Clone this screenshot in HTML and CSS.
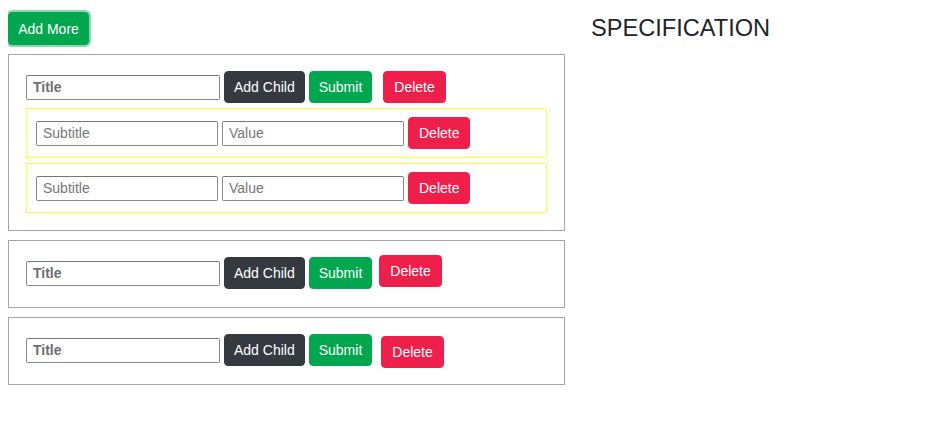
FILE: index.html
```html
<!DOCTYPE html>
<html>
<head>
<meta charset="utf-8">
<link rel="stylesheet" href="styles.css">
</head>
<body>
<div class="layout">
  <div class="left">
    <button class="btn btn-green btn-focus">Add More</button>
    <div class="card card-first">
      <div class="row">
        <input class="field field-title" placeholder="Title">
        <button class="btn btn-dark">Add Child</button>
        <button class="btn btn-green">Submit</button>
        <button class="btn btn-red btn-wide del-1">Delete</button>
      </div>
      <div class="child">
        <input class="field field-sub" placeholder="Subtitle">
        <input class="field field-sub" placeholder="Value">
        <button class="btn btn-red btn-wide">Delete</button>
      </div>
      <div class="child">
        <input class="field field-sub" placeholder="Subtitle">
        <input class="field field-sub" placeholder="Value">
        <button class="btn btn-red btn-wide">Delete</button>
      </div>
    </div>
    <div class="card">
      <div class="row">
        <input class="field field-title" placeholder="Title">
        <button class="btn btn-dark">Add Child</button>
        <button class="btn btn-green">Submit</button>
        <button class="btn btn-red btn-wide del-2">Delete</button>
      </div>
    </div>
    <div class="card">
      <div class="row">
        <input class="field field-title" placeholder="Title">
        <button class="btn btn-dark">Add Child</button>
        <button class="btn btn-green">Submit</button>
        <button class="btn btn-red btn-wide del-3">Delete</button>
      </div>
    </div>
  </div>
  <div class="right">
    <h2 class="spec">SPECIFICATION</h2>
  </div>
</div>
</body>
</html>
```

FILE: styles.css
```css
* { box-sizing: border-box; }
body {
  margin: 8px;
  font-family: "Liberation Sans", Arial, sans-serif;
  background: #fff;
  color: #212529;
}
.layout {
  display: flex;
  align-items: flex-start;
}
.left {
  width: 557px;
  display: flex;
  flex-direction: column;
  align-items: flex-start;
}
.right {
  margin-left: 26px;
}
.spec {
  margin: 7px 0 0 0;
  font-size: 23.6px;
  font-weight: normal;
  line-height: 26px;
  color: #212529;
}
.btn {
  font-family: "Liberation Sans", Arial, sans-serif;
  font-size: 14px;
  line-height: 20px;
  padding: 5px 9px;
  height: 32px;
  border: 1px solid transparent;
  border-radius: 4px;
  color: #fff;
  cursor: pointer;
}
.btn-wide { padding: 5px 10px; }
.btn-green { background: #00a74f; border-color: #00a74f; }
.btn-dark { background: #343a40; border-color: #343a40; }
.btn-red { background: #ee1f4a; border-color: #ee1f4a; }
.btn-focus {
  margin: 4px 0 0 0;
  height: 33px;
  width: 81px;
  padding: 5px 0;
  box-shadow: 0 0 0 2px rgba(0, 167, 79, 0.45);
}
.card {
  width: 557px;
  border: 1px solid #a6a6a6;
  padding: 16px 17px 18px 17px;
  margin-top: 9px;
}
.card-first { padding-bottom: 17px; }
.row {
  display: flex;
  align-items: center;
  gap: 4px;
  height: 32px;
}
.field {
  font-family: "Liberation Sans", Arial, sans-serif;
  font-size: 14px;
  height: 25px;
  padding: 1px 6px;
  border: 1px solid #8a8a8a;
  border-top-color: #777;
  border-radius: 2px;
  color: #333;
  background: #fff;
}
.field::placeholder { color: #777; }
.field-title { width: 194px; }
.field-title::placeholder { font-weight: bold; color: #6e6e6e; }
.field-sub { width: 182px; }
.del-1 { margin-left: 7px; }
.del-2 { margin-left: 3px; margin-bottom: 4px; }
.del-3 { margin-left: 5px; margin-top: 4px; }
.child {
  display: flex;
  align-items: center;
  gap: 4px;
  width: 521px;
  height: 50px;
  margin-top: 5px;
  border: 1px solid #ffff3c;
  padding: 0 9px;
}
```
